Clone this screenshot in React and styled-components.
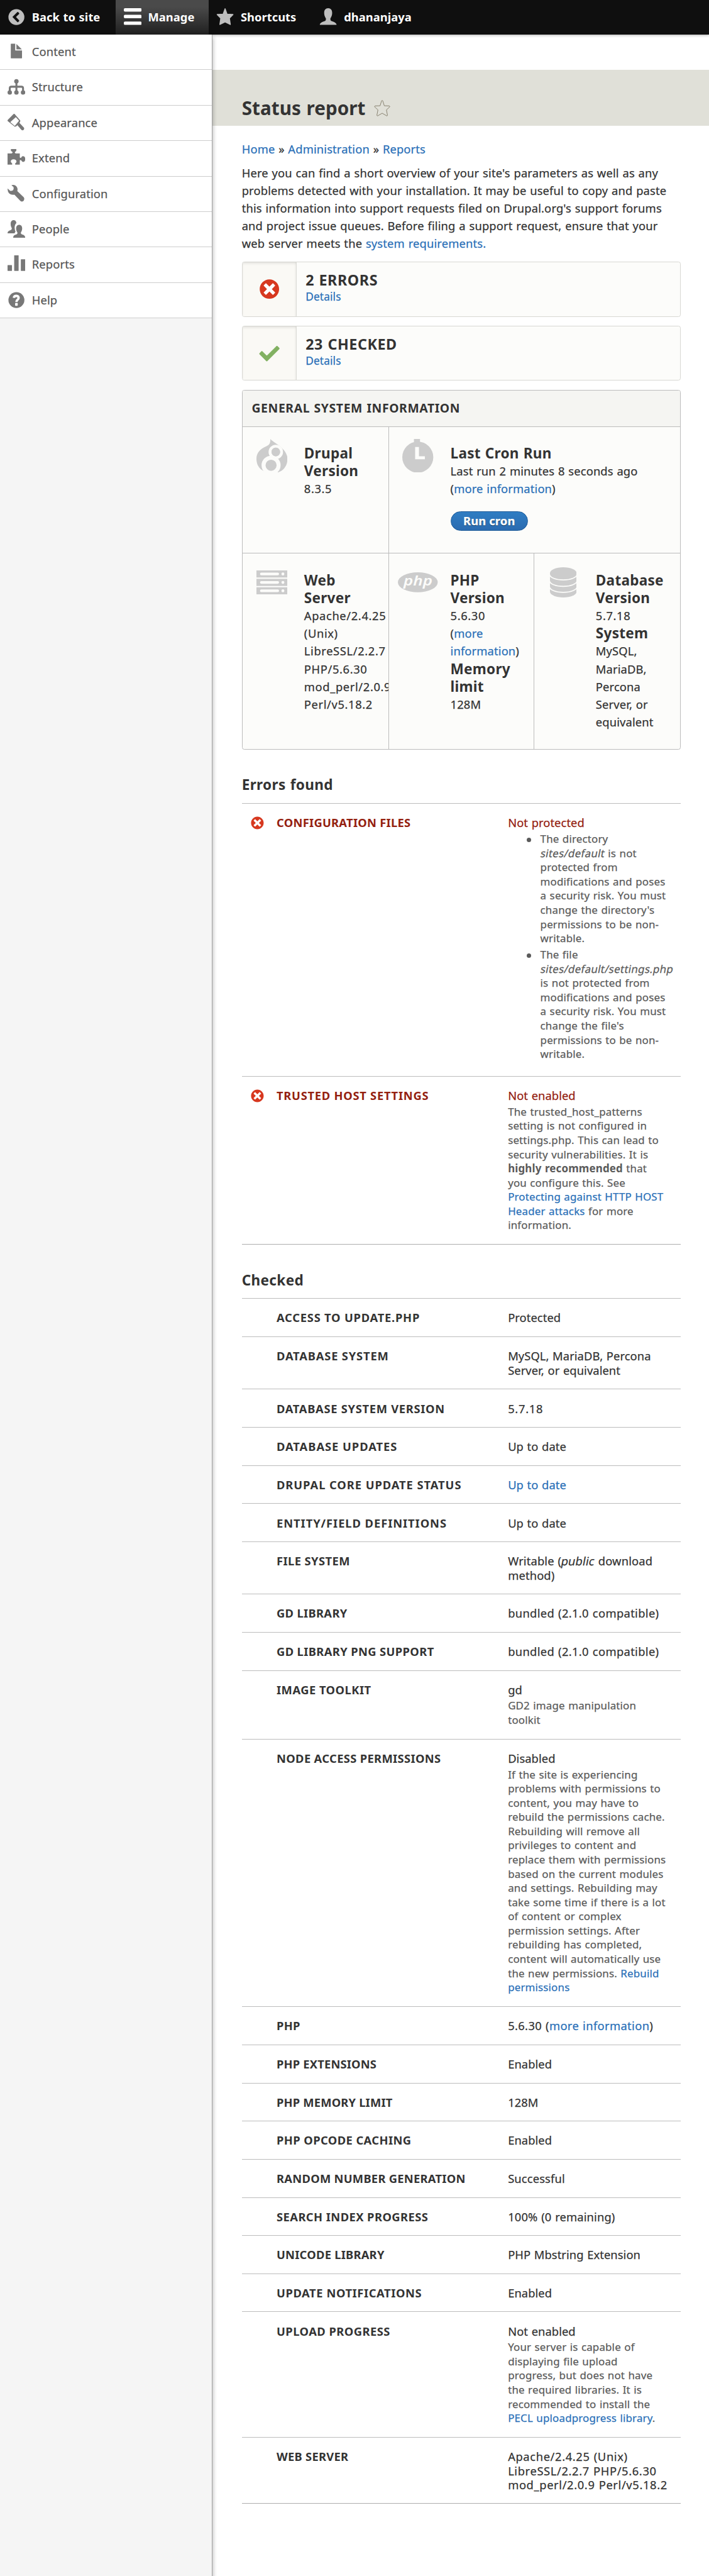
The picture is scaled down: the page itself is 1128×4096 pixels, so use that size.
import React from "react";
import styled, { createGlobalStyle, css } from "styled-components";

const GlobalStyle = createGlobalStyle`
  *, *::before, *::after { box-sizing: border-box; }
  html { font-size: 7.052px; }
  body {
    margin: 0;
    background: #fff;
    color: #333;
    font-family: "Noto Sans", "Open Sans", sans-serif;
    font-size: 2.6rem;
    line-height: 4rem;
    letter-spacing: 0.008em;
    word-spacing: 0.045em;
    -webkit-text-stroke: 0.25px currentColor;
  }
  h1, h2, h3, p, ul, dl, dt, dd { margin: 0; padding: 0; }
  h1, h2, h3, strong { -webkit-text-stroke: 0; }
  ul { list-style: none; }
`;

const Page = styled.div`
  display: flex;
  flex-direction: column;
  min-height: 4096px;
  overflow: hidden;
`;

const Toolbar = styled.nav`
  display: flex;
  flex: none;
  height: 7.8rem;
  background: #0f0f0f;
  box-shadow: 0 0 0.7rem 0.2rem rgba(0, 0, 0, 0.4);
  -webkit-text-stroke: 0;
`;

const Tab = styled.a`
  display: flex;
  align-items: center;
  gap: 1.5rem;
  width: ${(p) => p.$width};
  padding-left: 1.7rem;
  color: #fff;
  font-weight: 700;
  white-space: nowrap;
  letter-spacing: 0.002em;
  ${(p) =>
    p.$active &&
    css`
      padding-left: 1.8rem;
      background: linear-gradient(#4a4a4a 20%, #202020);
    `}
`;

const Glyph = styled.svg`
  flex: none;
  width: 4rem;
  height: 4rem;
  fill: currentColor;
  color: ${(p) => p.$color || "#787878"};
`;

const Body = styled.div`
  display: flex;
  flex: 1;
`;

const Sidebar = styled.aside`
  position: relative;
  z-index: 1;
  flex: none;
  width: 48rem;
  background: #f5f5f5;
  border-right: 1px solid #a0a0a0;
  box-shadow: 0 0.8rem 1rem 0.2rem rgba(0, 0, 0, 0.3);
`;

const MenuItem = styled.li`
  display: flex;
  align-items: center;
  gap: 1.5rem;
  height: 8rem;
  padding: 0 0 0.2rem 1.7rem;
  background: #fff;
  border-bottom: 1px solid #cdcdcd;
  color: #565656;
`;

const Main = styled.main`
  flex: 1;
  padding-top: 8rem;
`;

const TitleBar = styled.header`
  display: flex;
  align-items: center;
  gap: 1.9rem;
  height: 12.6rem;
  padding: 5.7rem 0 0.95rem 6.55rem;
  background: #e0e0d8;
`;

const Title = styled.h1`
  font-size: 4.2rem;
  line-height: 6rem;
  letter-spacing: 0.002em;
`;

const FavouriteStar = styled.svg`
  width: 3.7rem;
  height: 3.7rem;
  margin-top: -0.2rem;
  fill: none;
  stroke: #857f6d;
  stroke-width: 4;
  stroke-linejoin: round;
`;

const Content = styled.div`
  width: 105.55rem;
  padding: 3.17rem 0 0 6.55rem;
`;

const Breadcrumb = styled.div`
  white-space: nowrap;
`;

const Link = styled.a`
  color: #2a70b8;
  text-decoration: none;
`;

const Intro = styled.p`
  margin: 1.4rem 0 2.06rem;
  white-space: nowrap;
  letter-spacing: 0.009em;
`;

const Counter = styled.section`
  display: flex;
  height: 12.4rem;
  margin-bottom: 2rem;
  background: #fcfcfa;
  border: 1px solid #d8d8d3;
  border-radius: 0.5rem;
  overflow: hidden;
`;

const CounterIcon = styled.div`
  display: grid;
  place-items: center;
  width: 12.3rem;
  background: #faf9f5;
  border-right: 1px solid #dcdcd7;
  box-shadow: inset 0 0.4rem 0.8rem -0.3rem rgba(0, 0, 0, 0.14), inset -0.3rem 0 0.5rem -0.3rem rgba(0, 0, 0, 0.08);
`;

const CounterText = styled.div`
  padding: 2rem 0 0 1.95rem;
`;

const CounterTitle = styled.h2`
  font-size: 3.3rem;
  line-height: 4rem;
  font-weight: 700;
  letter-spacing: 0.025em;
`;

const CounterLink = styled(Link)`
  display: block;
  margin-top: -0.2rem;
  font-size: 2.45rem;
`;

const StatusSvg = styled.svg`
  width: ${(p) => p.$size};
  height: ${(p) => p.$size};
  fill: ${(p) => p.$color};
`;

const General = styled.section`
  margin-top: 2.07rem;
  height: 81.1rem;
  background: #fcfcfa;
  border: 1px solid #bcbcbc;
  border-radius: 0.5rem;
  overflow: hidden;
`;

const GeneralTitle = styled.h2`
  height: 8.2rem;
  padding: 1.98rem 0 0 2.1rem;
  background: #f5f5f2;
  border-bottom: 1px solid #bcbcbc;
  font-size: 2.75rem;
  line-height: 4rem;
  letter-spacing: 0.031em;
`;

const GeneralGrid = styled.div`
  display: grid;
  grid-template-columns: 33.1rem 32.8rem 1fr;
  grid-template-rows: 28.6rem 44.2rem;
`;

const Cell = styled.div`
  display: flex;
  grid-column: span ${(p) => p.$span || 1};
  min-width: 0;
  padding-left: ${(p) => (p.$first ? "0.1rem" : "0")};
  overflow: hidden;
  white-space: nowrap;
  border-right: ${(p) => (p.$last ? "none" : "1px solid #bcbcbc")};
  border-bottom: ${(p) => (p.$lower ? "none" : "1px solid #bcbcbc")};
`;

const CellIcon = styled.div`
  display: grid;
  place-items: center;
  flex: none;
  width: 13rem;
  height: 13rem;
`;

const CellSvg = styled.svg`
  width: ${(p) => p.$w};
  height: ${(p) => p.$h};
  fill: #ccc;
`;

const CellText = styled.div`
  padding: 4.02rem 0 0 0.82rem;
`;

const CellTitle = styled.h3`
  font-size: 3.2rem;
  line-height: 4rem;
  letter-spacing: 0.012em;
`;

const Versions = styled.div`
  letter-spacing: 0.034em;
`;

const CronButton = styled.button`
  display: block;
  margin-top: 3.05rem;
  width: 17.5rem;
  height: 4.4rem;
  padding: 0 0 0.2rem;
  border: 1px solid #1f5c99;
  border-radius: 2.2rem;
  background: linear-gradient(#2f7dc3, #2b6bb0);
  color: #fff;
  font: 700 2.6rem/4rem "Noto Sans", "Open Sans", sans-serif;
  letter-spacing: 0.008em;
  text-shadow: 0 1px 1px rgba(0, 0, 0, 0.6);
`;

const SectionTitle = styled.h2`
  margin: 6.05rem 0 2rem;
  font-size: 3.2rem;
  line-height: 4rem;
  letter-spacing: 0.016em;
`;

const Report = styled.div`
  border-bottom: 1px solid #adadad;
`;

const Row = styled.div`
  display: grid;
  grid-template-columns: 7.85rem 52.2rem 1fr;
  height: ${(p) => p.$height}rem;
  padding-top: 2.72rem;
  border-top: 1px solid #bcbcbc;
  line-height: 3.2rem;
  white-space: nowrap;
`;

const RowIcon = styled.div`
  padding-left: 1.9rem;
  line-height: 0;
`;

const RowLabel = styled.div`
  font-weight: 700;
  letter-spacing: ${(p) => p.$track || 0.015}em;
  word-spacing: 0;
  color: ${(p) => (p.$error ? "#94200f" : "#333")};
  -webkit-text-stroke: 0;
`;

const RowValue = styled.div`
  letter-spacing: ${(p) => p.$track || 0.004}em;
  color: ${(p) => (p.$error ? "#94200f" : "#333")};
`;

const Description = styled.div`
  margin-top: 0.44rem;
  font-size: 2.4rem;
  letter-spacing: 0.01em;
  color: #5a5a5a;
`;

const Bullets = styled.ul`
  padding: 0.1rem 0 0 4.2rem;
`;

const Bullet = styled.li`
  display: grid;
  grid-template-columns: 1rem 1fr;
  column-gap: 2.1rem;
  & + & { margin-top: 0.5rem; }
  &::before {
    content: "";
    width: 1rem;
    height: 1rem;
    margin-top: 1.25rem;
    border-radius: 50%;
    background: #5a5a5a;
  }
`;

const Slanted = styled.em`
  display: inline-block;
  font-style: normal;
  letter-spacing: ${(p) => p.$track || 0.008}em;
  transform: skewX(-11deg);
`;

const ErrorIcon = ({ size }) => (
  <StatusSvg $size={size} $color="#d7381f" viewBox="0 0 16 16">
    <circle cx="8" cy="8" r="6" fill="#fff" />
    <path d="M8.002 1c-3.868 0-7.002 3.134-7.002 7s3.134 7 7.002 7c3.865 0 7-3.134 7-7s-3.135-7-7-7zm4.025 9.284c.062.063.1.149.1.239 0 .091-.037.177-.1.24l-1.262 1.262c-.064.062-.15.1-.24.1s-.176-.036-.24-.1l-2.283-2.283-2.286 2.283c-.064.062-.15.1-.24.1s-.176-.036-.24-.1l-1.261-1.262c-.063-.062-.1-.148-.1-.24 0-.088.036-.176.1-.238l2.283-2.285-2.283-2.284c-.063-.064-.1-.15-.1-.24s.036-.176.1-.24l1.262-1.262c.063-.063.149-.1.24-.1.089 0 .176.036.24.1l2.285 2.284 2.283-2.284c.064-.063.15-.1.24-.1s.176.036.24.1l1.262 1.262c.062.063.1.149.1.24 0 .089-.037.176-.1.24l-2.283 2.284 2.283 2.284z" />
  </StatusSvg>
);

const CheckIcon = () => (
  <StatusSvg $size="5rem" $color="#82b162" viewBox="0 0 16 16">
    <path d="M6.464 13.676c-.194.194-.513.194-.707 0l-4.96-4.955c-.194-.193-.194-.513 0-.707l1.405-1.407c.194-.195.512-.195.707 0l2.849 2.848c.194.193.513.193.707 0l6.629-6.626c.195-.194.514-.194.707 0l1.404 1.404c.193.194.193.513 0 .707l-8.741 8.736z" />
  </StatusSvg>
);

const glyphs = {
  back: (
    <path
      fillRule="evenodd"
      d="M60 6a54 54 0 1 0 0 108a54 54 0 1 0 0-108zM33 60L66 27q3-3 6 0l6 6q3 3 0 6L57 60l21 22q3 3 0 6l-6 6q-3 3-6 0z"
    />
  ),
  menu: (
    <>
      <rect y="0" width="120" height="23" rx="8" />
      <rect y="45" width="120" height="23" rx="8" />
      <rect y="90" width="120" height="23" rx="8" />
    </>
  ),
  star: (
    <path
      d="M60 4L73 41L113 43L89 68L95 110L60 93L25 110L31 68L7 43L47 41z"
      stroke="currentColor"
      strokeWidth="7"
      strokeLinejoin="round"
    />
  ),
  user: (
    <path d="M60 0c17 0 27 12 27 32 0 20-8 30-12 38 0 10 1 14 8 17 16 6 32 10 34 26H3c2-16 18-20 34-26 7-3 8-7 8-17-4-8-12-18-12-38C33 12 43 0 60 0z" />
  ),
  content: (
    <>
      <path d="M24 6h28v46h46v51q0 2-2 2H24q-2 0-2-2V8q0-2 2-2z" />
      <path d="M60 8L97 45H60z" />
    </>
  ),
  structure: (
    <>
      <path d="M15 98V70q0-11 11-11h68q11 0 11 11V98M60 22V98" fill="none" stroke="currentColor" strokeWidth="13" />
      <circle cx="60" cy="22" r="15" />
      <circle cx="15" cy="98" r="15" />
      <circle cx="60" cy="98" r="15" />
      <circle cx="105" cy="98" r="15" />
    </>
  ),
  appearance: (
    <path
      fillRule="evenodd"
      d="M1 42L41 1q4-3 8 1L86 45q2 8-6 16L111 94q4 8-2 15q-8 6-15 0L66 77Q62 86 49 87L1 49q-2-3 0-7zM56 22L30 46Q24 52 19 56L49 82L78 47z"
    />
  ),
  extend: (
    <path d="M0 30H27Q36 28 34 20Q20 14 22 4Q23 0 26 0H56Q60 0 60 4Q62 14 50 20Q48 28 56 30H83V56Q88 62 92 58Q97 48 105 48Q120 50 120 67Q120 86 105 87Q97 86 93 77Q88 72 83 76V105H53Q48 100 56 94Q62 88 60 80Q56 68 41 69Q24 70 22 82Q22 92 30 97Q34 102 30 105H0z" />
  ),
  configuration: (
    <path d="M26 2Q52-5 65 18Q70 30 66 42L110 84Q117 94 109 107Q97 117 87 108L46 66Q26 70 12 58Q-2 44 1 24L18 40Q30 42 37 36Q44 28 40 14Z" />
  ),
  people: (
    <>
      <path d="M79 32c12 0 20 9 20 24 0 14-6 22-9 28 0 7 2 10 8 13 12 4 21 7 22 23H38c1-16 9-19 22-23 6-3 7-6 7-13-3-6-9-14-9-28 0-15 9-24 21-24z" />
      <path d="M41 0c10 0 17 5 19 20Q48 30 48 52Q49 68 54 78Q50 82 48 89H0c0-13 8-17 20-21 6-3 9-6 9-13-3-6-8-14-8-28C21 9 29 0 41 0z" />
    </>
  ),
  reports: (
    <>
      <rect x="0" y="66" width="30" height="39" rx="2" />
      <rect x="45" y="0" width="30" height="105" rx="2" />
      <rect x="90" y="27" width="30" height="78" rx="2" />
    </>
  ),
  help: (
    <>
      <circle cx="60" cy="60" r="54" />
      <path d="M43 45Q44 31 60 31Q75 32 75 46Q75 53 67 59Q60 64 60 73" fill="none" stroke="#fff" strokeWidth="16" />
      <rect x="51" y="80" width="18" height="19" rx="4" fill="#fff" />
    </>
  ),
};

const Icon = ({ name, color }) => (
  <Glyph viewBox="0 0 120 120" $color={color}>
    {glyphs[name]}
  </Glyph>
);

const DrupalIcon = () => (
  <CellSvg $w="7rem" $h="7.6rem" viewBox="141 87 210 228">
    <path d="M235 87C255 112 351 150 351 222C351 270 322 306 280 315L190 304C160 290 141 260 141 222C141 180 165 157 200 140C228 128 236 118 235 87z" />
    <circle cx="272" cy="175" r="39" fill="#ccc" stroke="#fcfcfa" strokeWidth="20" />
    <circle cx="240" cy="265" r="51" fill="#ccc" stroke="#fcfcfa" strokeWidth="27" />
    <circle cx="272" cy="175" r="29" />
  </CellSvg>
);

const ClockIcon = () => (
  <CellSvg $w="7rem" $h="7.6rem" viewBox="1134 87 210 228">
    <rect x="1213" y="87" width="41" height="30" />
    <circle cx="1239" cy="210" r="105" />
    <path fill="#fcfcfa" d="M1221 141h26v63h40v20h-66z" />
  </CellSvg>
);

const ServerIcon = () => (
  <CellSvg $w="7rem" $h="5.4rem" viewBox="0 0 210 162">
    {[0, 57, 114].map((y) => (
      <g key={y}>
        <rect y={y} width="210" height="48" />
        <rect x="24" y={y + 15} width="129" height="18" rx="9" fill="#fcfcfa" />
        <circle cx="179" cy={y + 24} r="10" fill="#fcfcfa" />
      </g>
    ))}
  </CellSvg>
);

const PhpIcon = () => (
  <CellSvg $w="9rem" $h="4.5rem" viewBox="0 0 270 135">
    <ellipse cx="135" cy="67.5" rx="135" ry="67.5" />
    <text
      x="136"
      y="89"
      textAnchor="middle"
      textLength="196"
      lengthAdjust="spacingAndGlyphs"
      fontFamily="Noto Sans"
      fontStyle="italic"
      fontWeight="600"
      fontSize="92"
      letterSpacing="0"
      fill="#fcfcfa"
    >
      php
    </text>
  </CellSvg>
);

const DatabaseIcon = () => (
  <CellSvg $w="6rem" $h="6.8rem" viewBox="0 0 60 68">
    <path d="M0 13A30 13 0 0 1 60 13V55A30 13 0 0 1 0 55z" />
    <path
      d="M-1 16A31 12.500 0 0 0 61 16M-1 30.500A31 12.500 0 0 0 61 30.500M-1 44A31 12.500 0 0 0 61 44"
      fill="none"
      stroke="#fcfcfa"
      strokeWidth="2.600"
    />
  </CellSvg>
);

const menu = [
  ["content", "Content"],
  ["structure", "Structure"],
  ["appearance", "Appearance"],
  ["extend", "Extend"],
  ["configuration", "Configuration"],
  ["people", "People"],
  ["reports", "Reports"],
  ["help", "Help"],
];

const Lines = ({ of }) =>
  of.map((line, i) => (
    <React.Fragment key={i}>
      {i > 0 && <br />}
      {line}
    </React.Fragment>
  ));

const errors = [
  {
    label: "Configuration files",
    height: 61.6,
    value: "Not protected",
    description: (
      <Bullets>
        <Bullet>
          <span>
            <Lines
              of={[
                "The directory",
                <>
                  <Slanted $track={0.017}>sites/default</Slanted> is not
                </>,
                "protected from",
                "modifications and poses",
                "a security risk. You must",
                "change the directory's",
                "permissions to be non-",
                "writable.",
              ]}
            />
          </span>
        </Bullet>
        <Bullet>
          <span>
            <Lines
              of={[
                "The file",
                <Slanted $track={0.017}>sites/default/settings.php</Slanted>,
                "is not protected from",
                "modifications and poses",
                "a security risk. You must",
                "change the file's",
                "permissions to be non-",
                "writable.",
              ]}
            />
          </span>
        </Bullet>
      </Bullets>
    ),
  },
  {
    label: "Trusted Host Settings",
    track: 0.04,
    height: 37.9,
    value: "Not enabled",
    description: (
      <Lines
        of={[
          "The trusted_host_patterns",
          "setting is not configured in",
          "settings.php. This can lead to",
          "security vulnerabilities. It is",
          <>
            <strong>highly recommended</strong> that
          </>,
          "you configure this. See",
          <Link>Protecting against HTTP HOST</Link>,
          <>
            <Link>Header attacks</Link> for more
          </>,
          "information.",
        ]}
      />
    ),
  },
];

const checked = [
  { label: "Access to update.php", height: 8.62, value: "Protected", track: 0.042 },
  { label: "Database system", height: 11.82, value: <Lines of={["MySQL, MariaDB, Percona", "Server, or equivalent"]} />, track: 0.045 },
  { label: "Database system version", height: 8.62, value: "5.7.18", track: 0.038, valueTrack: 0.04 },
  { label: "Database updates", height: 8.6, value: "Up to date", track: 0.052 },
  { label: "Drupal core update status", height: 8.6, value: <Link>Up to date</Link>, track: 0.051 },
  { label: "Entity/field definitions", height: 8.6, value: "Up to date", track: 0.051 },
  {
    label: "File system",
    height: 11.8,
    value: (
      <>
        Writable (<Slanted>public</Slanted> download
        <br />
        method)
      </>
    ),
    track: 0.023,
    valueTrack: 0.008,
  },
  { label: "GD library", height: 8.6, value: "bundled (2.1.0 compatible)", track: 0.018, valueTrack: 0.019 },
  { label: "GD library PNG support", height: 8.6, value: "bundled (2.1.0 compatible)", track: 0.021, valueTrack: 0.019 },
  {
    label: "Image toolkit",
    height: 15.5,
    value: "gd",
    description: <Lines of={["GD2 image manipulation", "toolkit"]} />,
    track: 0.026,
  },
  {
    label: "Node Access Permissions",
    height: 60.3,
    value: "Disabled",
    description: (
      <Lines
        of={[
          "If the site is experiencing",
          "problems with permissions to",
          "content, you may have to",
          "rebuild the permissions cache.",
          "Rebuilding will remove all",
          "privileges to content and",
          "replace them with permissions",
          "based on the current modules",
          "and settings. Rebuilding may",
          "take some time if there is a lot",
          "of content or complex",
          "permission settings. After",
          "rebuilding has completed,",
          "content will automatically use",
          <>
            the new permissions. <Link>Rebuild</Link>
          </>,
          <Link>permissions</Link>,
        ]}
      />
    ),
    track: 0.019,
  },
  {
    label: "PHP",
    height: 8.62,
    value: (
      <>
        5.6.30 (<Link>more information</Link>)
      </>
    ),
    valueTrack: 0.02,
  },
  { label: "PHP extensions", height: 8.62, value: "Enabled", track: 0.01 },
  { label: "PHP memory limit", height: 8.6, value: "128M", track: 0.01 },
  { label: "PHP OPcode caching", height: 8.6, value: "Enabled", track: 0.023 },
  { label: "Random number generation", height: 8.6, value: "Successful", valueTrack: 0.008 },
  { label: "Search index progress", height: 8.6, value: "100% (0 remaining)", track: 0.024, valueTrack: 0.008 },
  { label: "Unicode library", height: 8.6, value: "PHP Mbstring Extension", track: 0.013 },
  { label: "Update notifications", height: 8.6, value: "Enabled", track: 0.032 },
  {
    label: "Upload progress",
    height: 28.3,
    value: "Not enabled",
    description: (
      <Lines
        of={[
          "Your server is capable of",
          "displaying file upload",
          "progress, but does not have",
          "the required libraries. It is",
          "recommended to install the",
          <>
            <Link>PECL uploadprogress library</Link>.
          </>,
        ]}
      />
    ),
    track: 0.026,
  },
  {
    label: "Web server",
    height: 14.9,
    value: <Lines of={["Apache/2.4.25 (Unix)", "LibreSSL/2.2.7 PHP/5.6.30", "mod_perl/2.0.9 Perl/v5.18.2"]} />,
    valueTrack: 0.034,
  },
];

const ReportRows = ({ rows, error }) => (
  <Report>
    {rows.map((row) => (
      <Row key={row.label} $height={row.height}>
        <RowIcon>{error && <ErrorIcon size="3.25rem" />}</RowIcon>
        <RowLabel $error={error} $track={row.track}>
          {row.label.toUpperCase()}
        </RowLabel>
        <div>
          <RowValue $error={error} $track={row.valueTrack}>
            {row.value}
          </RowValue>
          {row.description && <Description>{row.description}</Description>}
        </div>
      </Row>
    ))}
  </Report>
);

export default function App() {
  return (
    <>
      <GlobalStyle />
      <Page>
        <Toolbar>
          <Tab $width="26.1rem">
            <Icon name="back" color="#bebebe" />
            Back to site
          </Tab>
          <Tab $width="21rem" $active>
            <Icon name="menu" color="#fff" />
            Manage
          </Tab>
          <Tab $width="23.3rem">
            <Icon name="star" color="#bebebe" />
            Shortcuts
          </Tab>
          <Tab $width="24.5rem">
            <Icon name="user" color="#bebebe" />
            dhananjaya
          </Tab>
        </Toolbar>
        <Body>
          <Sidebar>
            <ul>
              {menu.map(([name, label]) => (
                <MenuItem key={name}>
                  <Icon name={name} />
                  {label}
                </MenuItem>
              ))}
            </ul>
          </Sidebar>
          <Main>
            <TitleBar>
              <Title>Status report</Title>
              <FavouriteStar viewBox="0 0 108 108">
                <path d="M54 3Q57 3 58 6L68 38L101 39Q107 41 103 46L82 65L89 101Q88 106 83 104L54 87L25 104Q20 106 19 101L26 65L5 46Q1 41 7 39L40 38L50 6Q51 3 54 3z" />
              </FavouriteStar>
            </TitleBar>
            <Content>
              <Breadcrumb>
                <Link>Home</Link> » <Link>Administration</Link> » <Link>Reports</Link>
              </Breadcrumb>
              <Intro>
                <Lines
                  of={[
                    "Here you can find a short overview of your site's parameters as well as any",
                    "problems detected with your installation. It may be useful to copy and paste",
                    "this information into support requests filed on Drupal.org's support forums",
                    "and project issue queues. Before filing a support request, ensure that your",
                    <>
                      web server meets the <Link>system requirements.</Link>
                    </>,
                  ]}
                />
              </Intro>
              <Counter>
                <CounterIcon>
                  <ErrorIcon size="5rem" />
                </CounterIcon>
                <CounterText>
                  <CounterTitle>2 ERRORS</CounterTitle>
                  <CounterLink>Details</CounterLink>
                </CounterText>
              </Counter>
              <Counter>
                <CounterIcon>
                  <CheckIcon />
                </CounterIcon>
                <CounterText>
                  <CounterTitle>23 CHECKED</CounterTitle>
                  <CounterLink>Details</CounterLink>
                </CounterText>
              </Counter>
              <General>
                <GeneralTitle>GENERAL SYSTEM INFORMATION</GeneralTitle>
                <GeneralGrid>
                  <Cell $first>
                    <CellIcon>
                      <DrupalIcon />
                    </CellIcon>
                    <CellText>
                      <CellTitle>
                        Drupal
                        <br />
                        Version
                      </CellTitle>
                      <Versions>8.3.5</Versions>
                    </CellText>
                  </Cell>
                  <Cell $span={2} $last>
                    <CellIcon>
                      <ClockIcon />
                    </CellIcon>
                    <CellText>
                      <CellTitle>Last Cron Run</CellTitle>
                      <div>Last run 2 minutes 8 seconds ago</div>
                      <div>
                        (<Link>more information</Link>)
                      </div>
                      <CronButton>Run cron</CronButton>
                    </CellText>
                  </Cell>
                  <Cell $first $lower>
                    <CellIcon>
                      <ServerIcon />
                    </CellIcon>
                    <CellText>
                      <CellTitle>
                        Web
                        <br />
                        Server
                      </CellTitle>
                      <Versions>
                        <Lines
                          of={["Apache/2.4.25", "(Unix)", "LibreSSL/2.2.7", "PHP/5.6.30", "mod_perl/2.0.9", "Perl/v5.18.2"]}
                        />
                      </Versions>
                    </CellText>
                  </Cell>
                  <Cell $lower>
                    <CellIcon>
                      <PhpIcon />
                    </CellIcon>
                    <CellText>
                      <CellTitle>
                        PHP
                        <br />
                        Version
                      </CellTitle>
                      <Versions>5.6.30</Versions>
                      <div>
                        (<Link>more</Link>
                        <br />
                        <Link>information</Link>)
                      </div>
                      <CellTitle>
                        Memory
                        <br />
                        limit
                      </CellTitle>
                      <div>128M</div>
                    </CellText>
                  </Cell>
                  <Cell $lower $last>
                    <CellIcon>
                      <DatabaseIcon />
                    </CellIcon>
                    <CellText>
                      <CellTitle>
                        Database
                        <br />
                        Version
                      </CellTitle>
                      <Versions>5.7.18</Versions>
                      <CellTitle>System</CellTitle>
                      <Lines of={["MySQL,", "MariaDB,", "Percona", "Server, or", "equivalent"]} />
                    </CellText>
                  </Cell>
                </GeneralGrid>
              </General>
              <SectionTitle>Errors found</SectionTitle>
              <ReportRows rows={errors} error />
              <SectionTitle>Checked</SectionTitle>
              <ReportRows rows={checked} />
            </Content>
          </Main>
        </Body>
      </Page>
    </>
  );
}
